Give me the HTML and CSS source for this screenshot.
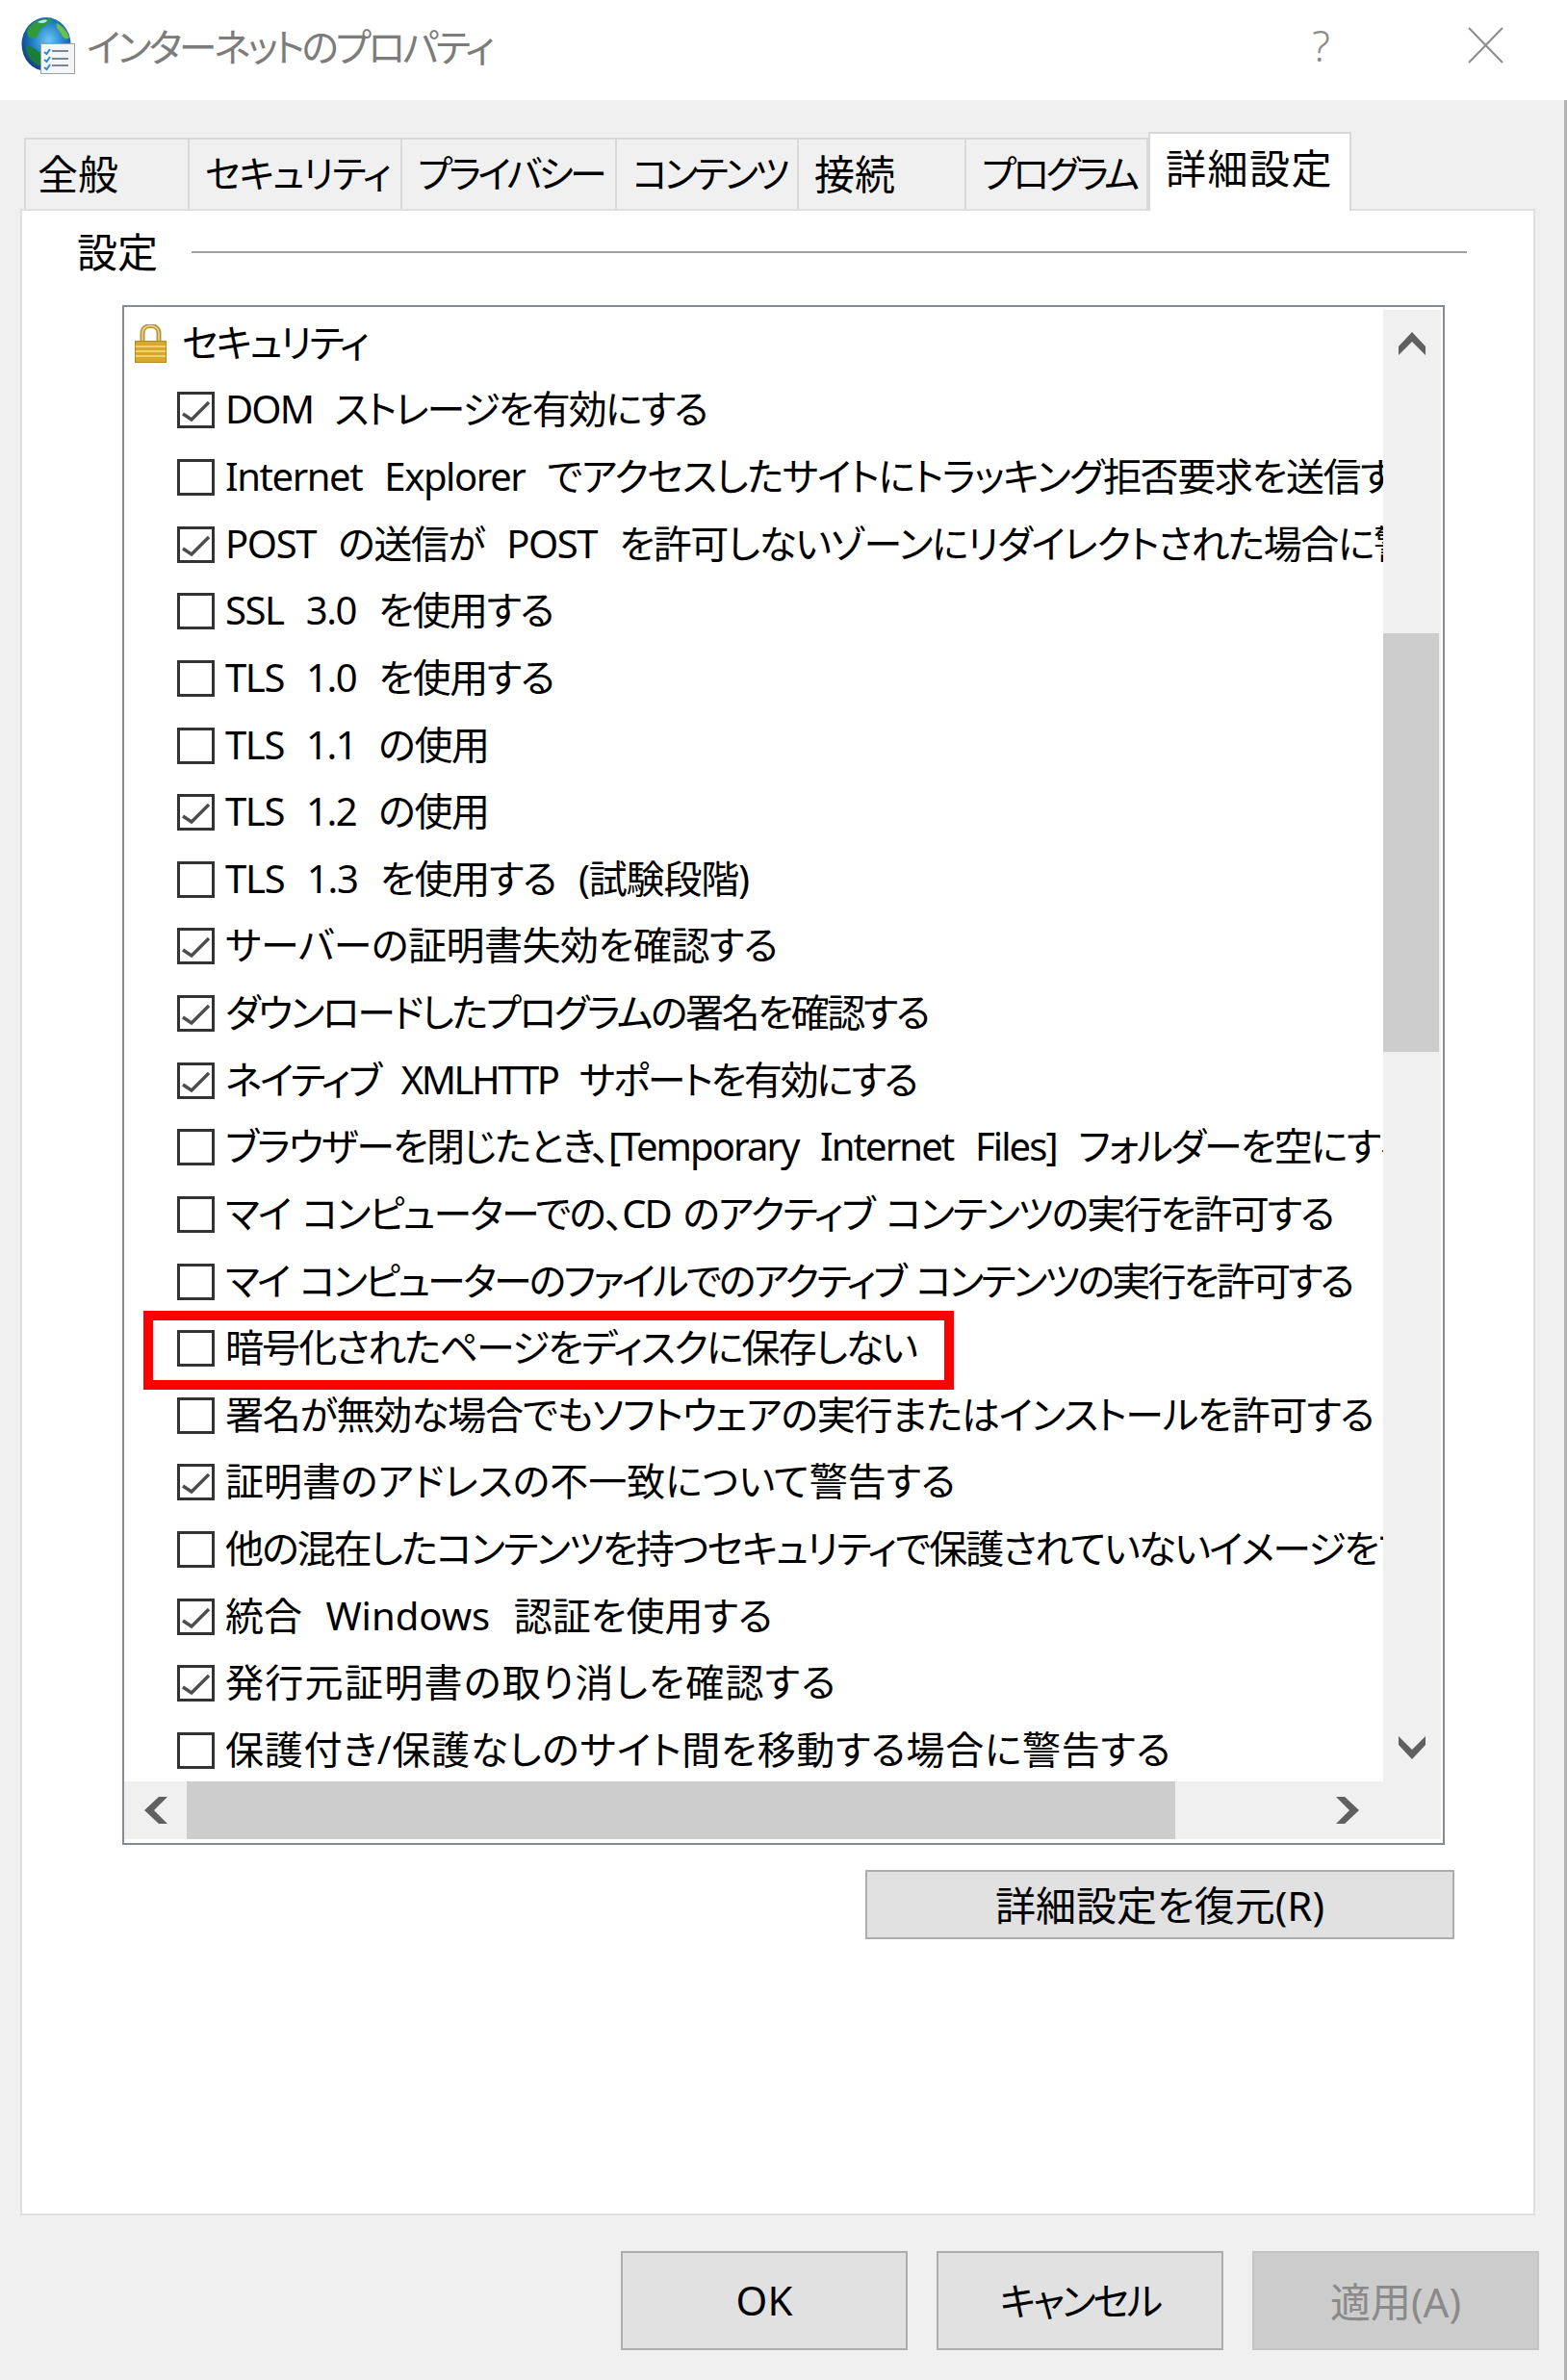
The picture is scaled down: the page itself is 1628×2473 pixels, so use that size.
FILE: index.html
```html
<!DOCTYPE html>
<html lang="ja">
<head>
<meta charset="utf-8">
<title>インターネットのプロパティ</title>
<link rel="stylesheet" href="styles.css">
</head>
<body>
<svg class="defs" width="0" height="0" aria-hidden="true">
  <symbol id="box" viewBox="0 0 39 38"><rect x="1.5" y="1.5" width="36" height="35" fill="#fff" stroke="#333" stroke-width="3"/></symbol>
  <symbol id="checked" viewBox="0 0 39 38"><rect x="1.5" y="1.5" width="36" height="35" fill="#fff" stroke="#333" stroke-width="3"/><path d="M6 23l9 6L33 11" fill="none" stroke="#4d4d4d" stroke-width="3.4"/></symbol>
</svg>
<div class="dialog">
  <header class="titlebar">
    <svg class="appicon" width="60" height="60" viewBox="0 0 60 60" aria-hidden="true">
      <defs>
        <radialGradient id="sea" cx="0.55" cy="0.42" r="0.6"><stop offset="0" stop-color="#6cc6f2"/><stop offset="0.55" stop-color="#1f7fc4"/><stop offset="1" stop-color="#123f86"/></radialGradient>
      </defs>
      <ellipse cx="27" cy="28" rx="25.5" ry="28" fill="url(#sea)"/>
      <path d="M8 12C14 3 24 0 33 2c-2 5-9 6-12 11s-3 9-8 9-7-5-5-10z" fill="#2f9a3a"/>
      <path d="M38 6c6 3 11 9 13 15-3 3-6 1-8-3s-7-8-5-12z" fill="#6ec04a"/>
      <path d="M6 30c6 0 11 3 15 8s1 11-2 12C11 46 6 38 6 30z" fill="#1c7d3a"/>
      <path d="M18 5c3-2 7-3 10-2-1 3-6 4-10 2z" fill="#bfe6f7"/>
      <rect x="21.500" y="27.500" width="35" height="31" fill="#f3f5f7" stroke="#9aa0a6"/>
      <path d="M33 35h17M33 43h17M33 50h17" stroke="#7d8790" stroke-width="2"/>
      <path d="M25 36l2.500 2 3.500-5M25 44l2.500 2 3.500-5M25 52l2.500 2 3.500-5" fill="none" stroke="#2b8bd0" stroke-width="2"/>
    </svg>
    <h1 class="title">インターネットのプロパティ</h1>
    <span class="help">?</span>
    <svg class="close" width="37" height="38" viewBox="0 0 37 38" aria-hidden="true"><path d="M1 1l35 36M36 1L1 37" stroke="#8c8c8c" stroke-width="2" fill="none"/></svg>
  </header>
  <nav class="tabs">
    <div class="tab kanji first">全般</div>
    <div class="tab roomy">セキュリティ</div>
    <div class="tab">プライバシー</div>
    <div class="tab">コンテンツ</div>
    <div class="tab kanji">接続</div>
    <div class="tab">プログラム</div>
    <div class="tab kanji active">詳細設定</div>
  </nav>
  <main class="panel">
    <div class="group-head"><span class="group-label">設定</span><span class="group-line"></span></div>
    <section class="listbox">
      <div class="rows">
        <div class="row head">
          <svg class="lock" width="33" height="40" viewBox="0 0 33 40" aria-hidden="true">
            <path d="M8 19V9c0-10 17-10 17 0v10" fill="none" stroke="#b8953a" stroke-width="5"/>
            <path d="M8 19V9c0-10 17-10 17 0v10" fill="none" stroke="#ecd892" stroke-width="1.500"/>
            <rect x="0.500" y="17.500" width="32" height="22" fill="#d9a72c" stroke="#b48a25"/>
            <path d="M1 23h31M1 28h31M1 33h31" stroke="#f0d373" stroke-width="2"/>
          </svg>
          <span class="label tight">セキュリティ</span>
        </div>
        <label class="row"><svg class="cb"><use href="#checked"/></svg><span class="label latin snug">DOM ストレージを有効にする</span></label>
        <label class="row"><svg class="cb"><use href="#box"/></svg><span class="label latin">Internet Explorer でアクセスしたサイトにトラッキング拒否要求を送信する</span></label>
        <label class="row"><svg class="cb"><use href="#checked"/></svg><span class="label latin">POST の送信が POST を許可しないゾーンにリダイレクトされた場合に警告する</span></label>
        <label class="row"><svg class="cb"><use href="#box"/></svg><span class="label latin">SSL 3.0 を使用する</span></label>
        <label class="row"><svg class="cb"><use href="#box"/></svg><span class="label latin">TLS 1.0 を使用する</span></label>
        <label class="row"><svg class="cb"><use href="#box"/></svg><span class="label latin">TLS 1.1 の使用</span></label>
        <label class="row"><svg class="cb"><use href="#checked"/></svg><span class="label latin">TLS 1.2 の使用</span></label>
        <label class="row"><svg class="cb"><use href="#box"/></svg><span class="label latin relaxed">TLS 1.3 を使用する (試験段階)</span></label>
        <label class="row"><svg class="cb"><use href="#checked"/></svg><span class="label open">サーバーの証明書失効を確認する</span></label>
        <label class="row"><svg class="cb"><use href="#checked"/></svg><span class="label tight">ダウンロードしたプログラムの署名を確認する</span></label>
        <label class="row"><svg class="cb"><use href="#checked"/></svg><span class="label latin tight">ネイティブ XMLHTTP サポートを有効にする</span></label>
        <label class="row"><svg class="cb"><use href="#box"/></svg><span class="label latin snug">ブラウザーを閉じたとき、[Temporary Internet Files] フォルダーを空にする</span></label>
        <label class="row"><svg class="cb"><use href="#box"/></svg><span class="label snug">マイ コンピューターでの、CD のアクティブ コンテンツの実行を許可する</span></label>
        <label class="row"><svg class="cb"><use href="#box"/></svg><span class="label tighter">マイ コンピューターのファイルでのアクティブ コンテンツの実行を許可する</span></label>
        <label class="row marked"><svg class="cb"><use href="#box"/></svg><span class="label snug">暗号化されたページをディスクに保存しない</span></label>
        <label class="row"><svg class="cb"><use href="#box"/></svg><span class="label relaxed">署名が無効な場合でもソフトウェアの実行またはインストールを許可する</span></label>
        <label class="row"><svg class="cb"><use href="#checked"/></svg><span class="label even">証明書のアドレスの不一致について警告する</span></label>
        <label class="row"><svg class="cb"><use href="#box"/></svg><span class="label snug">他の混在したコンテンツを持つセキュリティで保護されていないイメージをブロックする</span></label>
        <label class="row"><svg class="cb"><use href="#checked"/></svg><span class="label latin even">統合 Windows 認証を使用する</span></label>
        <label class="row"><svg class="cb"><use href="#checked"/></svg><span class="label wide">発行元証明書の取り消しを確認する</span></label>
        <label class="row"><svg class="cb"><use href="#box"/></svg><span class="label airy">保護付き/保護なしのサイト間を移動する場合に警告する</span></label>
      </div>
      <div class="vbar">
        <div class="varrow"><svg width="28" height="24" viewBox="0 0 28 24" aria-hidden="true"><path d="M0 24V15L14 0l14 15v9L14 10z" fill="#606060"/></svg></div>
        <div class="vthumb"></div>
        <div class="varrow end"><svg width="28" height="24" viewBox="0 0 28 24" aria-hidden="true"><path d="M0 0v9l14 15L28 9V0L14 14z" fill="#606060"/></svg></div>
      </div>
      <div class="hbar">
        <div class="harrow"><svg width="24" height="28" viewBox="0 0 24 28" aria-hidden="true"><path d="M24 0h-9L0 14l15 14h9L10 14z" fill="#606060"/></svg></div>
        <div class="hthumb"></div>
        <div class="harrow end"><svg width="24" height="28" viewBox="0 0 24 28" aria-hidden="true"><path d="M0 0h9l15 14L9 28H0l14-14z" fill="#606060"/></svg></div>
      </div>
    </section>
    <button class="btn restore" type="button">詳細設定を復元(R)</button>
  </main>
  <footer class="footer">
    <button class="btn action" type="button">OK</button>
    <button class="btn action kana" type="button">キャンセル</button>
    <button class="btn action disabled" type="button">適用(A)</button>
  </footer>
  <div class="edge"></div>
</div>
</body>
</html>
```
FILE: styles.css
```css
* { box-sizing: border-box; }
html, body { margin: 0; padding: 0; }
body {
  width: 1628px;
  height: 2473px;
  overflow: hidden;
  background: #f0f0f0;
  color: #000;
  font-family: "Noto Sans", "Noto Sans CJK JP", sans-serif;
  font-size: 40px;
  font-feature-settings: "palt";
}
.defs { position: absolute; }
.dialog { position: relative; width: 1628px; height: 2473px; display: flex; flex-direction: column; }
.titlebar {
  height: 104px;
  background: #fff;
  display: flex;
  align-items: center;
  padding-left: 21px;
}
.appicon { flex: none; margin-top: -8px; }
.title {
  margin: -10px 0 0 9px;
  font-size: 40px;
  font-weight: 400;
  color: #7c7c7c;
  letter-spacing: -3.2px;
  white-space: nowrap;
}
.help {
  margin: -10px 0 0 auto;
  font-size: 44px;
  font-weight: 300;
  color: #8c8c8c;
}
.close { flex: none; margin: -10px 66px 0 143px; }
.tabs {
  height: 80px;
  margin: 33px 0 0 25px;
  display: grid;
  grid-template-columns: 172px 221px 223px 189px 174px 189px 211px;
  justify-content: start;
  align-items: end;
  position: relative;
  z-index: 1;
}
.tab {
  height: 74px;
  padding: 0 0 6px 16px;
  border: 2px solid #d9d9d9;
  border-left-width: 0;
  border-bottom: 0;
  display: flex;
  align-items: center;
  white-space: nowrap;
  font-size: 39px;
  letter-spacing: -3.6px;
}
.tab.roomy { letter-spacing: -1.6px; }
.tab.kanji { font-size: 42px; letter-spacing: 0; }
.tab.first { border-left-width: 2px; padding-left: 12px; }
.tab.active {
  height: 82px;
  margin-bottom: -2px;
  padding-bottom: 14px;
  background: #fff;
  border-left-width: 2px;
  letter-spacing: 1.5px;
}
.panel {
  width: 1574px;
  height: 2085px;
  margin-left: 21px;
  padding-left: 57px;
  background: #fff;
  border: 2px solid #dfdfdf;
  display: flex;
  flex-direction: column;
}
.group-head { height: 86px; display: flex; align-items: center; padding-right: 69px; }
.group-label { margin-right: 35px; padding-bottom: 6px; font-size: 42px; }
.group-line { flex: 1; height: 2px; background: #a0a0a0; }
.listbox {
  width: 1374px;
  height: 1600px;
  margin: 12px 0 0 47px;
  padding: 3px 2px 4px 0;
  border: 2px solid #858a94;
  display: grid;
  grid-template-columns: 1fr 60px;
  grid-template-rows: 1fr 60px;
}
.rows { overflow: hidden; }
.row {
  height: 69.63px;
  padding-left: 55px;
  display: flex;
  align-items: center;
  position: relative;
  white-space: nowrap;
}
.row.head { padding-left: 11px; }
.lock { flex: none; margin-right: 16px; }
.cb { flex: none; width: 39px; height: 38px; margin-right: 11px; }
.label { padding-bottom: 6px; letter-spacing: -1.4px; word-spacing: 4px; }
.label.latin { word-spacing: 14px; }
.label.tighter { letter-spacing: -2.8px; }
.label.tight { letter-spacing: -2.4px; }
.label.snug { letter-spacing: -1.9px; }
.label.relaxed { letter-spacing: -1.2px; }
.label.open { letter-spacing: -0.5px; }
.label.even { letter-spacing: 0; }
.label.airy { letter-spacing: 0.7px; }
.label.wide { letter-spacing: 1.3px; }
.row.marked::after {
  content: "";
  box-sizing: border-box;
  position: absolute;
  left: 20px;
  top: -4px;
  width: 842px;
  height: 82px;
  border: 10px solid #f00;
}
.vbar { background: #f0f0f0; display: flex; flex-direction: column; }
.varrow { height: 70px; flex: none; display: flex; align-items: center; justify-content: center; }
.varrow.end { margin-top: auto; }
.vthumb { height: 435px; width: 58px; margin-top: 266px; background: #cdcdcd; }
.hbar {
  grid-column: 1 / -1;
  background: #f0f0f0;
  display: flex;
  padding-right: 65px;
}
.harrow { width: 65px; flex: none; display: flex; align-items: center; justify-content: center; }
.harrow.end { margin-left: auto; }
.hthumb { width: 1027px; background: #cdcdcd; }
.btn {
  font: inherit;
  font-feature-settings: inherit;
  font-size: 42px;
  color: #000;
  background: #e1e1e1;
  border: 2px solid #adadad;
  padding: 0 0 3px;
}
.restore { width: 612px; height: 72px; margin: 26px 0 0 819px; }
.footer { display: flex; justify-content: flex-end; gap: 30px; padding: 37px 29px 0 0; }
.action { width: 298px; height: 103px; }
.action.kana { font-size: 40px; letter-spacing: -3px; }
.disabled { background: #cccccc; border-color: #c4c4c4; color: #8a8a8a; }
.edge { position: absolute; right: 0; top: 104px; bottom: 0; width: 3px; background: #b4b4b4; }
```
